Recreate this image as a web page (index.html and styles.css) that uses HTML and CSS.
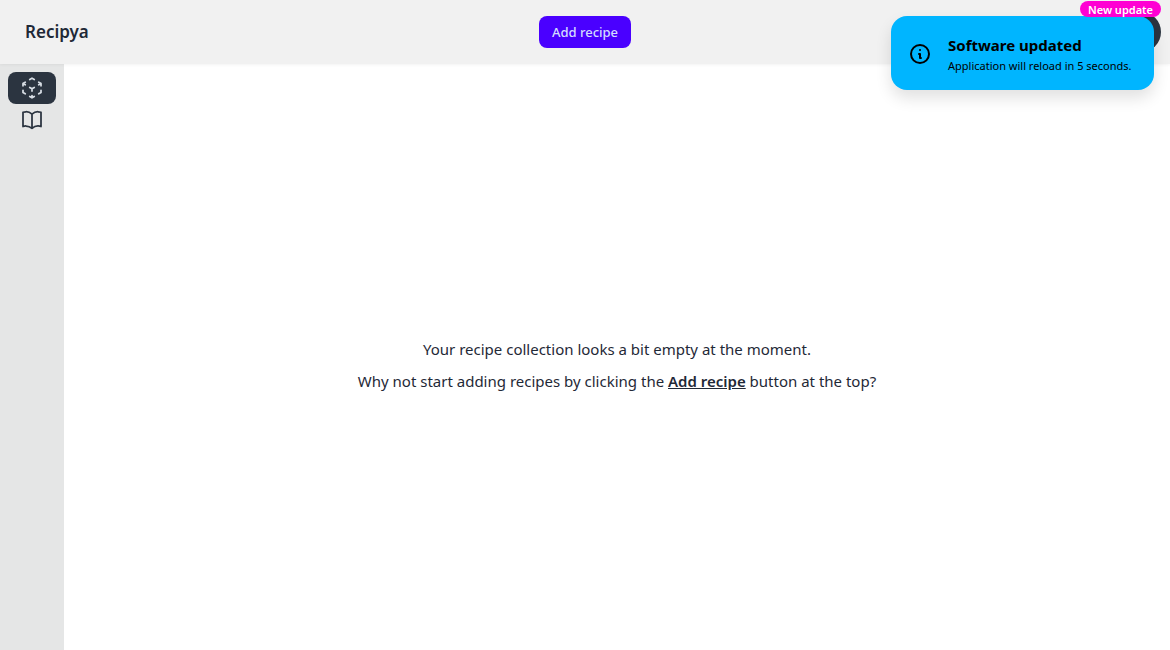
FILE: index.html
```html
<!DOCTYPE html>
<html lang="en">
<head>
<meta charset="utf-8">
<meta name="viewport" content="width=device-width, initial-scale=1">
<title>Recipya</title>
<link rel="stylesheet" href="styles.css">
</head>
<body>
<header class="navbar">
  <div class="navbar-start"><a class="brand" href="#">Recipya</a></div>
  <button class="add-button" type="button">Add recipe</button>
  <div class="navbar-end">
    <div class="indicator">
      <button class="avatar" type="button" aria-label="Account"></button>
      <span class="badge">New update</span>
    </div>
  </div>
</header>
<div class="shell">
  <nav class="sidebar" aria-label="Main">
    <a class="side-link active" href="#" aria-label="Recipes">
      <svg class="icon" viewBox="0 0 24 24"><path d="M21 7.5l-2.25-1.313M21 7.5v2.25m0-2.25l-2.25 1.313M3 7.5l2.25-1.313M3 7.5l2.25 1.313M3 7.5v2.25m9 3l2.25-1.313M12 12.75l-2.25-1.313M12 12.75V15m0 6.75l2.25-1.313M12 21.75V19.5m0 2.25l-2.25-1.313m0-16.875L12 2.25l2.25 1.313M21 14.25v2.25l-2.25 1.313m-13.5 0L3 16.5v-2.25"/></svg>
    </a>
    <a class="side-link" href="#" aria-label="Cookbooks">
      <svg class="icon" viewBox="0 0 24 24"><path d="M12 6.042A8.967 8.967 0 006 3.75c-1.052 0-2.062.18-3 .512v14.25A8.987 8.987 0 016 18c2.305 0 4.408.867 6 2.292m0-14.25a8.966 8.966 0 016-2.292c1.052 0 2.062.18 3 .512v14.25A8.987 8.987 0 0018 18a8.967 8.967 0 00-6 2.292m0-14.25v14.25"/></svg>
    </a>
  </nav>
  <main class="content">
    <p>Your recipe collection looks a bit empty at the moment.</p>
    <p>Why not start adding recipes by clicking the <a class="inline-link" href="#">Add recipe</a> button at the top?</p>
  </main>
</div>
<div class="toast" role="status">
  <svg class="icon toast-icon" viewBox="0 0 24 24"><path d="M13 16h-1v-4h-1m1-4h.01M21 12a9 9 0 11-18 0 9 9 0 0118 0z"/></svg>
  <div class="toast-body">
    <h3 class="toast-title">Software updated</h3>
    <p class="toast-text">Application will reload in 5 seconds.</p>
  </div>
</div>
</body>
</html>
```

FILE: styles.css
```css
* { box-sizing: border-box; }
body {
  margin: 0;
  min-height: 100vh;
  display: flex;
  flex-direction: column;
  background: #fff;
  color: #1f2937;
  font-family: "Noto Sans", "Open Sans", sans-serif;
  font-size: 15px;
  line-height: 24px;
}
h3, p { margin: 0; }
button { border: 0; font-family: inherit; cursor: pointer; }
.navbar {
  position: relative;
  display: grid;
  grid-template-columns: 1fr auto 1fr;
  align-items: center;
  height: 64px;
  padding: 0 9px;
  background: #f1f1f1;
  box-shadow: 0 1px 3px rgba(0, 0, 0, .05);
}
.brand {
  display: block;
  padding: 0 16px;
  font-size: 17px;
  font-weight: 600;
  color: inherit;
  text-decoration: none;
}
.add-button {
  height: 32px;
  padding: 0 13px;
  border-radius: 8px;
  background: #4a00ff;
  color: #d3dbff;
  font-size: 13px;
  font-weight: 500;
}
.navbar-end { display: flex; justify-content: flex-end; }
.indicator { position: relative; display: flex; }
.avatar {
  width: 40px;
  height: 40px;
  border-radius: 50%;
  background: #2b3440;
}
.badge {
  position: absolute;
  z-index: 2;
  top: -11px;
  right: 0;
  height: 16px;
  padding: 0 8px;
  border-radius: 8px;
  background: #ff00d3;
  color: #fff;
  font-size: 11px;
  font-weight: 600;
  line-height: 17px;
  white-space: nowrap;
}
.shell { display: flex; flex: 1; }
.sidebar {
  width: 64px;
  padding: 8px;
  background: #e5e6e6;
}
.side-link {
  display: flex;
  align-items: center;
  justify-content: center;
  height: 32px;
  border-radius: 8px;
  color: #2b3440;
}
.side-link.active { background: #2b3440; color: #d7dde4; }
.icon {
  width: 24px;
  height: 24px;
  fill: none;
  stroke: currentColor;
  stroke-width: 1.75;
  stroke-linecap: round;
  stroke-linejoin: round;
}
.content {
  flex: 1;
  display: flex;
  flex-direction: column;
  justify-content: center;
  gap: 8px;
  padding-top: 16px;
  text-align: center;
}
.inline-link { color: inherit; font-weight: 600; }
.toast {
  position: absolute;
  z-index: 1;
  top: 16px;
  right: 16px;
  display: flex;
  align-items: center;
  gap: 16px;
  padding: 17px 17px 16px;
  border-radius: 16px;
  background: #00b5ff;
  color: #000;
  box-shadow: 0 8px 16px rgba(0, 0, 0, .12);
}
.toast-icon { stroke-width: 2; }
.toast-body { min-width: 189px; }
.toast-title { font-size: 15px; font-weight: 700; line-height: 25px; }
.toast-text { font-size: 11px; line-height: 16px; }
```
